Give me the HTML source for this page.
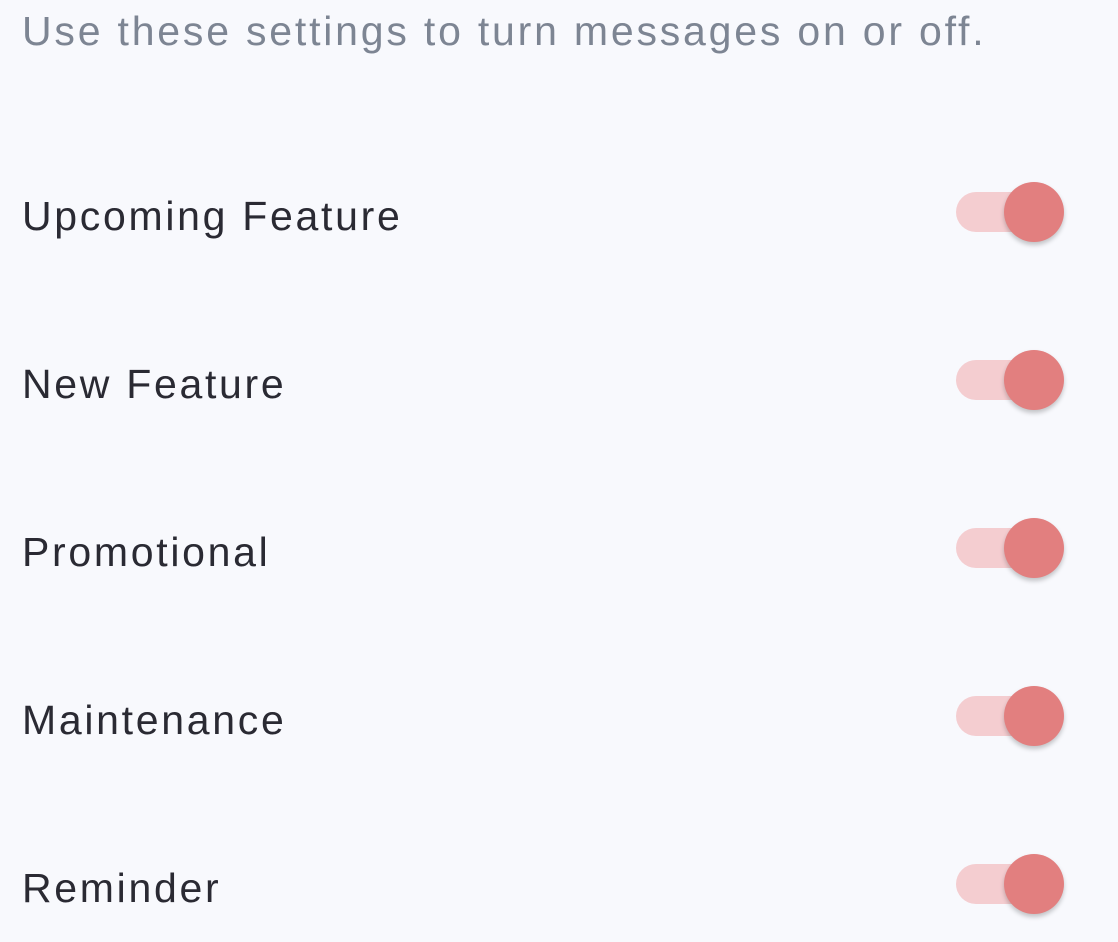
<!DOCTYPE html>
<html><head><style>
body{margin:0;width:1118px;height:942px;background:#f8f9fd;font-family:"Liberation Sans",sans-serif;position:relative;overflow:hidden}
.sub{position:absolute;left:22px;top:8px;font-size:41px;color:#7d8593;letter-spacing:2.8px}
.row{position:absolute;left:22px;font-size:41px;color:#2a2a33;letter-spacing:2.7px;line-height:48px}
.tr{position:absolute;left:956px;width:90px;height:40px;border-radius:20px;background:#f4cdd0}
.kn{position:absolute;left:1004px;width:60px;height:60px;border-radius:50%;background:#e27f7f;box-shadow:0 3px 5px rgba(0,0,0,0.22)}
</style></head><body>
<div class="sub">Use these settings to turn messages on or off.</div>
<div class="row" style="top:192px">Upcoming Feature</div>
<div class="tr" style="top:192px"></div><div class="kn" style="top:182px"></div>
<div class="row" style="top:360px">New Feature</div>
<div class="tr" style="top:360px"></div><div class="kn" style="top:350px"></div>
<div class="row" style="top:528px">Promotional</div>
<div class="tr" style="top:528px"></div><div class="kn" style="top:518px"></div>
<div class="row" style="top:696px">Maintenance</div>
<div class="tr" style="top:696px"></div><div class="kn" style="top:686px"></div>
<div class="row" style="top:864px">Reminder</div>
<div class="tr" style="top:864px"></div><div class="kn" style="top:854px"></div>
</body></html>
